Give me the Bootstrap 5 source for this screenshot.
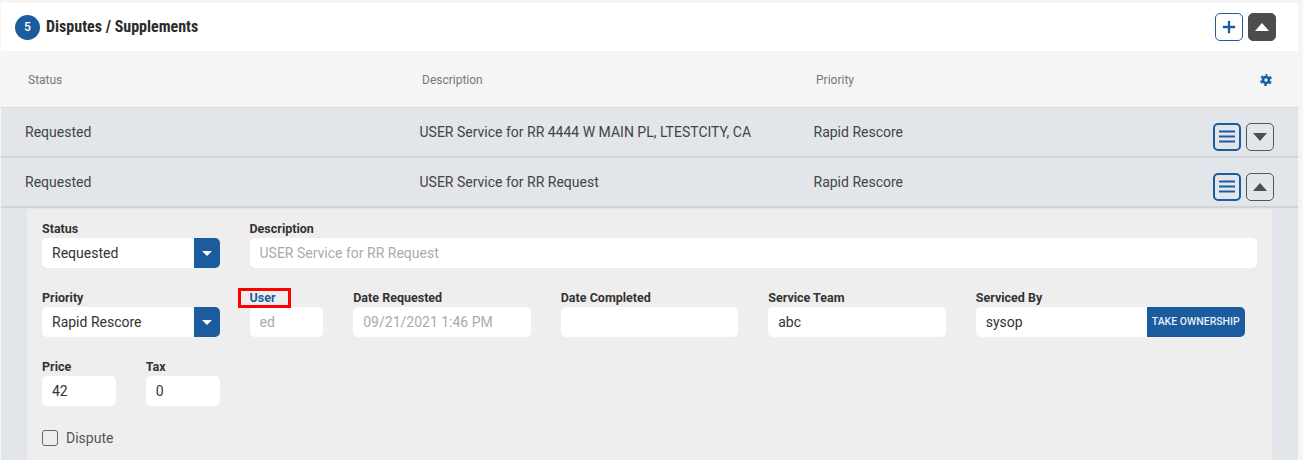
<!DOCTYPE html>
<html lang="en">
<head>
<meta charset="utf-8">
<title>Disputes / Supplements</title>
<link href="https://cdn.jsdelivr.net/npm/bootstrap@5.3.0/dist/css/bootstrap.min.css" rel="stylesheet">
<style>
html,body{height:460px;overflow:hidden}
body{background:#f5f5f5;font-family:Roboto,sans-serif;font-size:14px;color:#333;padding:3px 5px 0 1px}
.sec-head{height:48px;background:#fff;padding:0 22px 0 14px}
.count-dot{width:25px;height:25px;border-radius:50%;background:#1a5c9e;color:#fff;font-size:12px;font-weight:500}
.sec-title{font-size:16px;font-weight:700;font-stretch:condensed;color:#2b2b2b;margin-left:6px}
.col-head{height:57px;padding-top:1px;background:#f5f5f5;color:#777;font-size:12px;padding-left:27px;padding-right:27px;border-bottom:1px solid #d5d8dd;display:grid;grid-template-columns:394px 394px 1fr 20px;align-items:center}
.gear-cell{justify-self:end;margin-right:-1px;display:block}
.data-row{height:50px;background:#e2e5ea;padding:0 24px;border-bottom:2px solid #d0d3d8;display:grid;grid-template-columns:394.5px 394px 1fr auto;align-items:center;color:#444}
.sq-btn{width:28px;height:28px;padding:0;border-radius:5px;display:inline-flex;align-items:center;justify-content:center;background:transparent;border:1.5px solid #555}
.sq-blue{border:2px solid #1a5c9e}
.sq-white{background:#fff;border:1.5px solid #1a5c9e}
.sq-dark{background:#4d4d4d;border-color:#4d4d4d}
.row-actions{margin-top:9px}
.panel-outer{background:#e2e5ea;padding:1px 26px 0 26px;height:252px}
.panel-form{background:#eee;height:100%;padding:13px 15px 0}
.form-row{--bs-gutter-x:30px}
.fld-label{font-size:12.5px;font-weight:700;color:#333;line-height:14px;margin:0 0 2px;display:block}
.fld-label.is-link{color:#1a5c9e;position:relative}
.fld{height:30px;border:0;border-radius:5px;background:#fff;font-size:14px;color:#333;padding:0 10px;box-shadow:none;width:100%;display:block}
.fld:disabled{background:#fff;color:#aaa;opacity:1}
.sel-arrow{width:26px;height:30px;background:#1a5c9e;border-radius:0 5px 5px 0;flex:none;display:flex;align-items:center;justify-content:center}
.fld-sel{border-radius:5px 0 0 5px}
.own-btn{background:#1a5c9e;color:#e8eef5;border:0;height:30px;width:98px;flex:none;font-size:10.5px;font-weight:500;padding:0;border-radius:0 5px 5px 0;white-space:nowrap}
.own-wrap{width:269px}
.own-wrap .fld{border-radius:5px 0 0 5px}
.flag{position:absolute;left:-12px;top:-3px;width:53px;height:20px;border:3px solid #f00;pointer-events:none}
.user-cell{position:relative}
.fld-row2,.fld-row3{margin-top:23px}
.chk{width:16px;height:16px;border:1.5px solid #666;border-radius:3px;background:transparent;appearance:none;margin:0 8px 0 0;display:block;flex:none}
.chk-row{margin-top:22px;color:#555;font-size:14px}
.chk-row label{line-height:20px}
</style>
</head>
<body>
<div class="sec-head d-flex align-items-center">
  <span class="count-dot d-flex align-items-center justify-content-center">5</span>
  <span class="sec-title">Disputes / Supplements</span>
  <div class="ms-auto d-flex" style="gap:5px">
    <button class="sq-btn sq-white" aria-label="Add"><svg width="14" height="14" viewBox="0 0 16 16"><path d="M8 1v14M1 8h14" stroke="#1a5c9e" stroke-width="2.6" fill="none"/></svg></button>
    <button class="sq-btn sq-dark" aria-label="Collapse"><svg width="14" height="8" viewBox="0 0 14 8"><path d="M7 0l7 8H0z" fill="#fff"/></svg></button>
  </div>
</div>
<div class="col-head">
  <span>Status</span><span>Description</span><span>Priority</span>
  <svg class="gear-cell" width="12" height="12" viewBox="0 0 12 12" aria-hidden="true"><circle cx="6" cy="6" r="3" fill="none" stroke="#1a5c9e" stroke-width="2.6"/><circle cx="6" cy="6" r="5" fill="none" stroke="#1a5c9e" stroke-width="2" stroke-dasharray="2.6 2.64" stroke-dashoffset="1.3" transform="rotate(-90 6 6)"/></svg>
</div>
<div class="data-row">
  <span>Requested</span><span>USER Service for RR 4444 W MAIN PL, LTESTCITY, CA</span><span>Rapid Rescore</span>
  <div class="d-flex row-actions" style="gap:5px">
    <button class="sq-btn sq-blue" aria-label="Menu"><svg width="16" height="13" viewBox="0 0 16 13"><path d="M0 1.5h16M0 6.5h16M0 11.5h16" stroke="#1a5c9e" stroke-width="2"/></svg></button>
    <button class="sq-btn" aria-label="Expand"><svg width="14" height="8" viewBox="0 0 14 8"><path d="M0 0h14L7 8z" fill="#4d4d4d"/></svg></button>
  </div>
</div>
<div class="data-row">
  <span>Requested</span><span>USER Service for RR Request</span><span>Rapid Rescore</span>
  <div class="d-flex row-actions" style="gap:5px">
    <button class="sq-btn sq-blue" aria-label="Menu"><svg width="16" height="13" viewBox="0 0 16 13"><path d="M0 1.5h16M0 6.5h16M0 11.5h16" stroke="#1a5c9e" stroke-width="2"/></svg></button>
    <button class="sq-btn" aria-label="Collapse"><svg width="14" height="8" viewBox="0 0 14 8"><path d="M7 0l7 8H0z" fill="#4d4d4d"/></svg></button>
  </div>
</div>
<div class="panel-outer">
  <div class="panel-form">
    <div class="row form-row">
      <div class="col-2">
        <label class="fld-label">Status</label>
        <div class="d-flex"><input class="fld fld-sel" value="Requested"><span class="sel-arrow"><svg width="10" height="5" viewBox="0 0 10 5"><path d="M0 0h10L5 5z" fill="#fff"/></svg></span></div>
      </div>
      <div class="col-10">
        <label class="fld-label">Description</label>
        <input class="fld" disabled value="USER Service for RR Request">
      </div>
    </div>
    <div class="row form-row fld-row2">
      <div class="col-2">
        <label class="fld-label">Priority</label>
        <div class="d-flex"><input class="fld fld-sel" value="Rapid Rescore"><span class="sel-arrow"><svg width="10" height="5" viewBox="0 0 10 5"><path d="M0 0h10L5 5z" fill="#fff"/></svg></span></div>
      </div>
      <div class="col-1">
        <div class="user-cell"><span class="flag"></span><label class="fld-label is-link">User</label></div>
        <input class="fld" disabled value="ed">
      </div>
      <div class="col-2">
        <label class="fld-label">Date Requested</label>
        <input class="fld" disabled value="09/21/2021 1:46 PM">
      </div>
      <div class="col-2">
        <label class="fld-label">Date Completed</label>
        <input class="fld" value="">
      </div>
      <div class="col-2">
        <label class="fld-label">Service Team</label>
        <input class="fld" value="abc">
      </div>
      <div class="col-3">
        <label class="fld-label">Serviced By</label>
        <div class="d-flex own-wrap"><input class="fld" value="sysop"><button class="own-btn">TAKE OWNERSHIP</button></div>
      </div>
    </div>
    <div class="row form-row fld-row3">
      <div class="col-1">
        <label class="fld-label">Price</label>
        <input class="fld" value="42">
      </div>
      <div class="col-1">
        <label class="fld-label">Tax</label>
        <input class="fld" value="0">
      </div>
    </div>
    <div class="d-flex align-items-center chk-row">
      <input type="checkbox" class="chk" id="dispute"><label for="dispute">Dispute</label>
    </div>
  </div>
</div>
<script src="https://cdn.jsdelivr.net/npm/bootstrap@5.3.0/dist/js/bootstrap.bundle.min.js"></script>
</body>
</html>
